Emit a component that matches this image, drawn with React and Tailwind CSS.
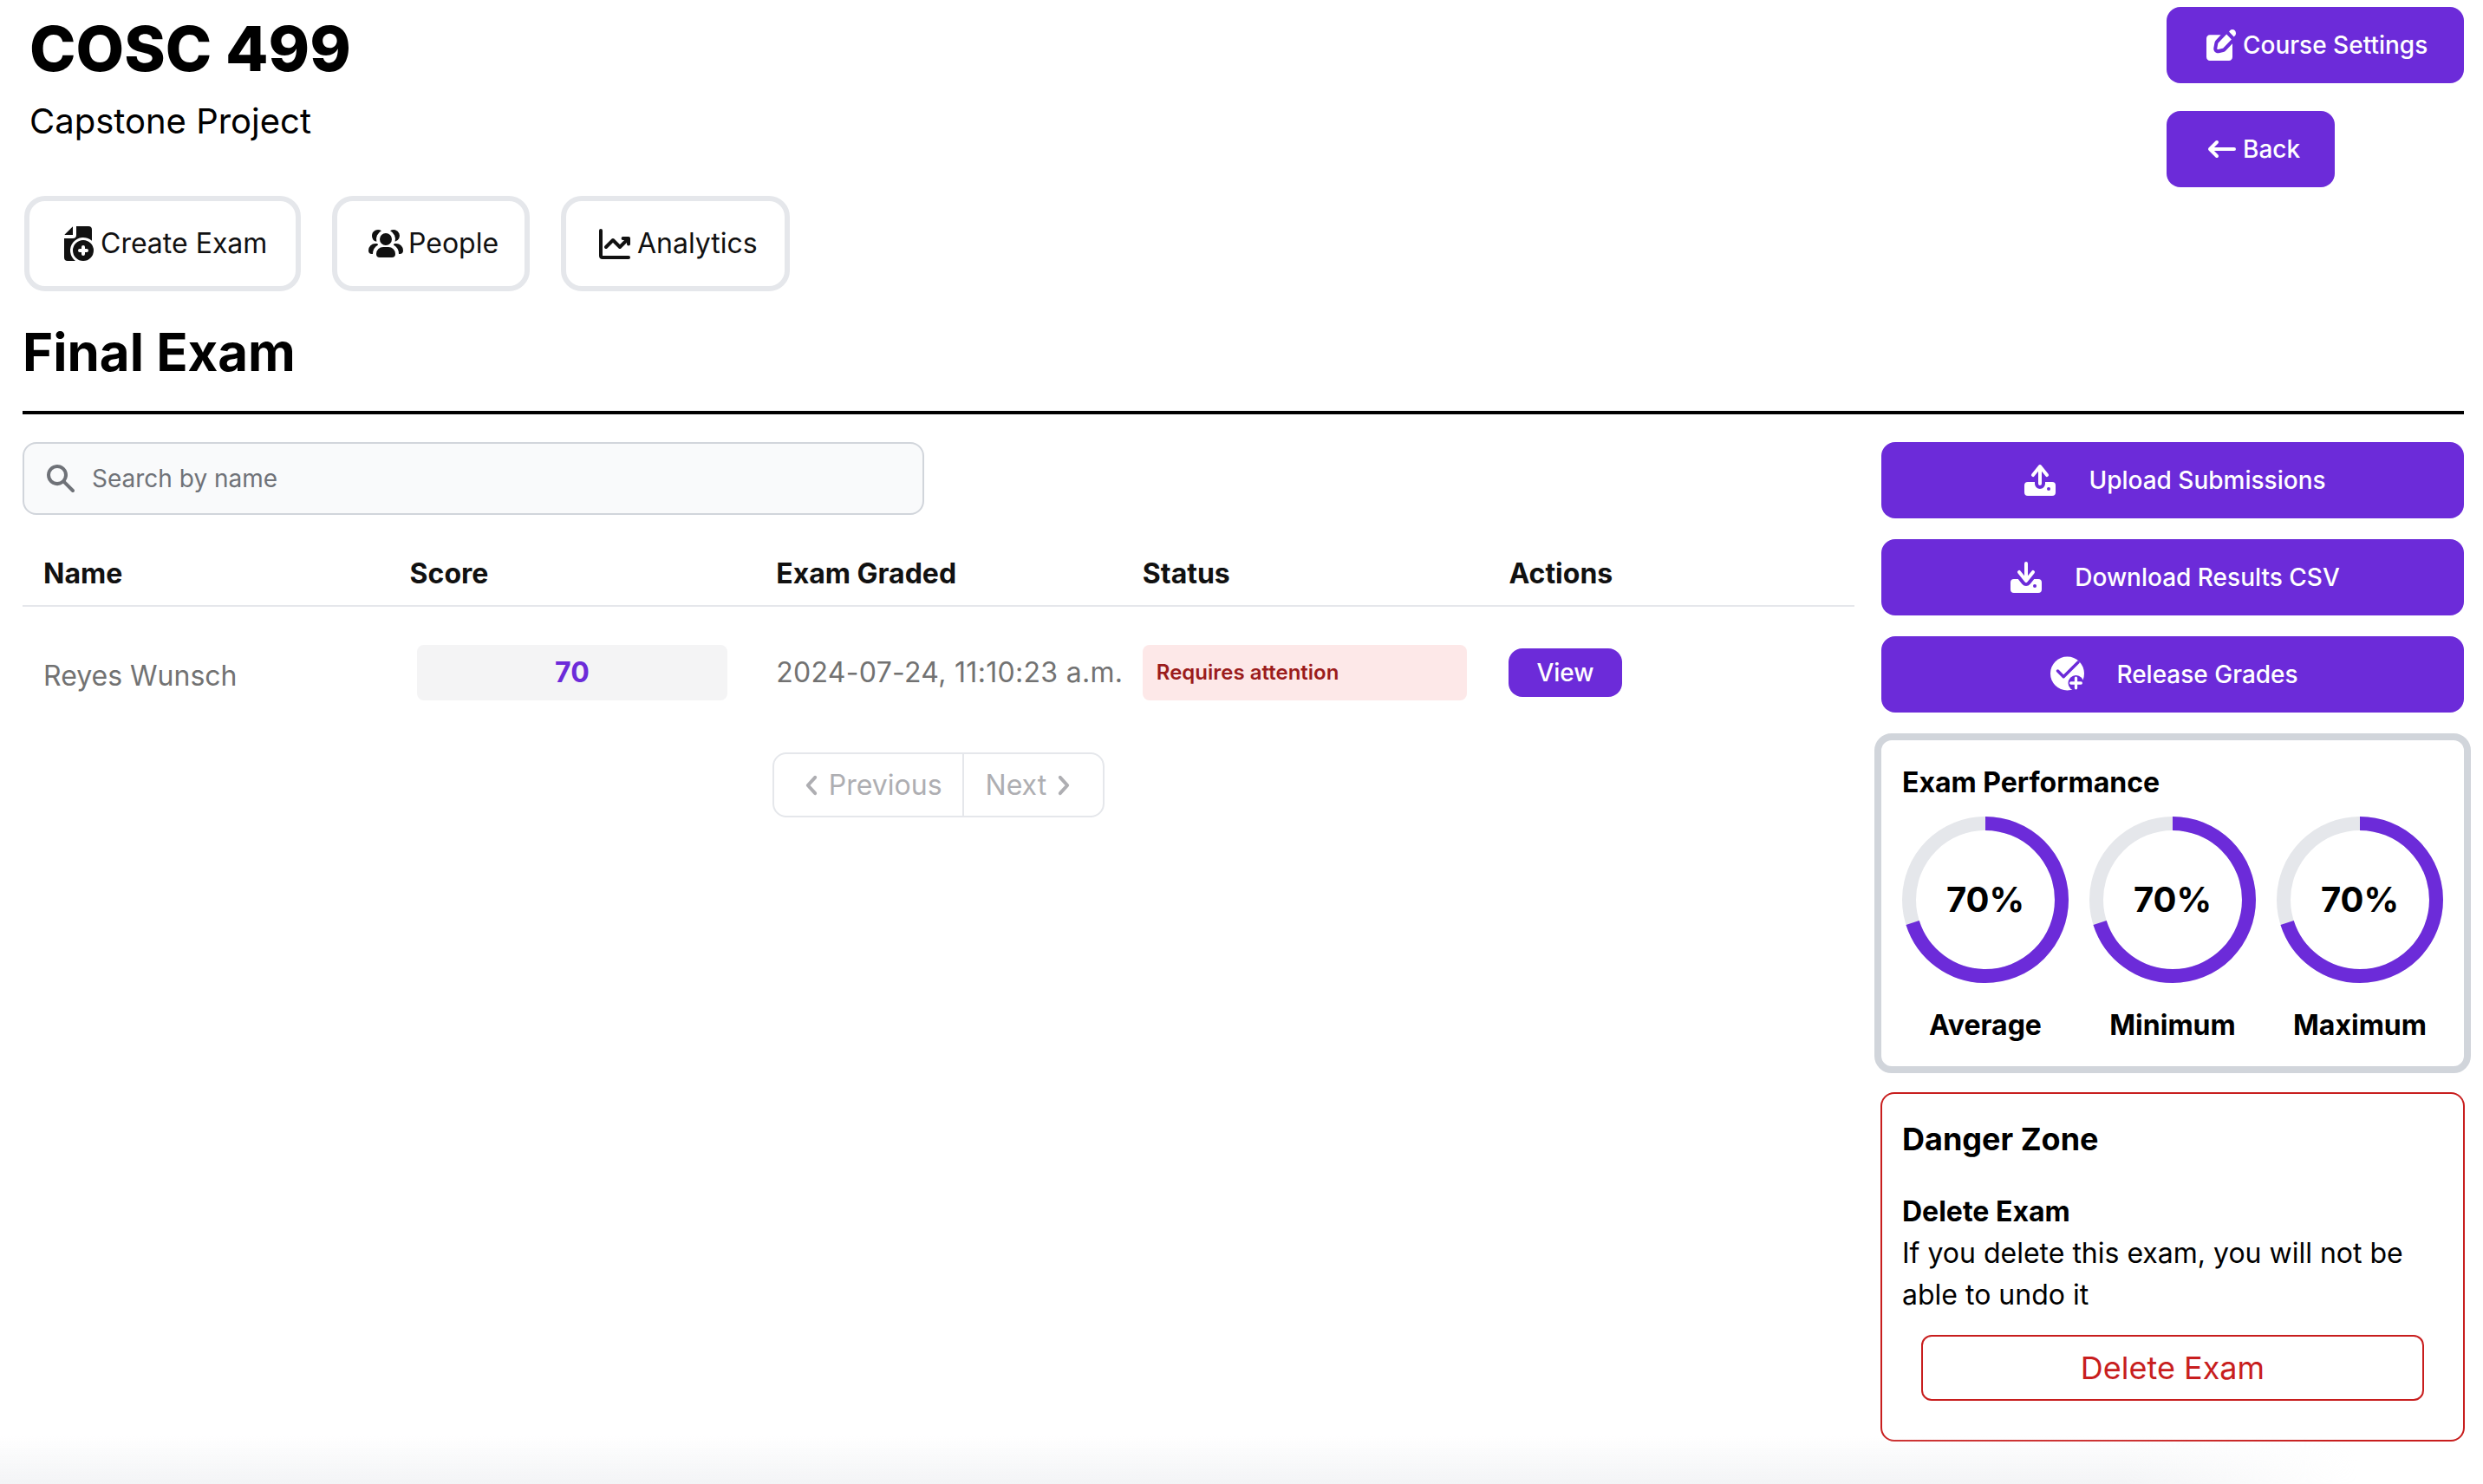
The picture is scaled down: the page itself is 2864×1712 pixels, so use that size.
const PURPLE_BTN = "bg-[#6C2BD9] text-white font-medium text-[28px] rounded-[16px]";

function Svg({ className = "", children, fill = "currentColor" }) {
  return (
    <svg viewBox="0 0 24 24" fill={fill} className={`shrink-0 ${className}`} xmlns="http://www.w3.org/2000/svg">
      {children}
    </svg>
  );
}

const EditIcon = () => (
  <Svg className="w-12 h-12">
    <path fillRule="evenodd" clipRule="evenodd" d="M11.32 6.176H5c-1.105 0-2 .949-2 2.118v10.588C3 20.052 3.895 21 5 21h11c1.105 0 2-.948 2-2.118v-7.75l-3.914 4.144A2.46 2.46 0 0 1 12.81 16l-2.681.568c-1.75.37-3.292-1.263-2.942-3.115l.536-2.839c.097-.512.335-.983.684-1.352l2.914-3.086Z" />
    <path fillRule="evenodd" clipRule="evenodd" d="M19.846 4.318a2.148 2.148 0 0 0-.437-.692 2.014 2.014 0 0 0-.654-.463 1.92 1.92 0 0 0-1.544 0 2.014 2.014 0 0 0-.654.463l-.546.578 2.852 3.02.546-.579a2.14 2.14 0 0 0 .437-.692 2.244 2.244 0 0 0 0-1.635ZM17.45 8.721 14.597 5.7 9.82 10.76a.54.54 0 0 0-.137.27l-.536 2.84c-.07.37.239.696.588.622l2.682-.567a.492.492 0 0 0 .255-.145l4.778-5.06Z" />
  </Svg>
);

const ArrowLeft = () => (
  <Svg className="w-12 h-12" fill="none">
    <path stroke="currentColor" strokeLinecap="round" strokeLinejoin="round" strokeWidth="2" d="M5 12h14M5 12l4-4m-4 4 4 4" />
  </Svg>
);

const FilePlus = () => (
  <Svg className="w-12 h-12">
    <path fillRule="evenodd" clipRule="evenodd" d="M9 7V2.221a2 2 0 0 0-.5.365L4.586 6.5a2 2 0 0 0-.365.5H9Zm2 0V2h7a2 2 0 0 1 2 2v6.41A7.5 7.5 0 1 0 10.5 22H6a2 2 0 0 1-2-2V9h5a2 2 0 0 0 2-2Z" />
    <path fillRule="evenodd" clipRule="evenodd" d="M9 16a6 6 0 1 1 12 0 6 6 0 0 1-12 0Zm6-3a1 1 0 0 1 1 1v1h1a1 1 0 1 1 0 2h-1v1a1 1 0 1 1-2 0v-1h-1a1 1 0 1 1 0-2h1v-1a1 1 0 0 1 1-1Z" />
  </Svg>
);

const UsersIcon = () => (
  <Svg className="w-12 h-12">
    <path fillRule="evenodd" clipRule="evenodd" d="M12 6a3.5 3.5 0 1 0 0 7 3.5 3.5 0 0 0 0-7Zm-1.5 8a4 4 0 0 0-4 4 2 2 0 0 0 2 2h7a2 2 0 0 0 2-2 4 4 0 0 0-4-4h-3Zm6.82-3.096a5.51 5.51 0 0 0-2.797-6.293 3.5 3.5 0 1 1 2.796 6.292ZM19.5 18h.5a2 2 0 0 0 2-2 4 4 0 0 0-4-4h-1.1a5.503 5.503 0 0 1-.471.762A5.998 5.998 0 0 1 19.5 18ZM4 7.5a3.5 3.5 0 0 1 5.477-2.889 5.5 5.5 0 0 0-2.796 6.293A3.501 3.501 0 0 1 4 7.5ZM7.1 12H6a4 4 0 0 0-4 4 2 2 0 0 0 2 2h.5a5.998 5.998 0 0 1 3.071-5.238A5.505 5.505 0 0 1 7.1 12Z" />
  </Svg>
);

const ChartIcon = () => (
  <Svg className="w-12 h-12" fill="none">
    <path stroke="currentColor" strokeLinecap="round" strokeLinejoin="round" strokeWidth="2" d="M4 4.5V19a1 1 0 0 0 1 1h15M7 14l4-4 4 4 5-5m0 0h-3.207M20 9v3.207" />
  </Svg>
);

const UploadIcon = () => (
  <Svg className="w-12 h-12">
    <path fillRule="evenodd" clipRule="evenodd" d="M12 3a1 1 0 0 1 .78.375l4 5a1 1 0 1 1-1.56 1.25L13 6.85V14a1 1 0 1 1-2 0V6.85L8.78 9.626a1 1 0 1 1-1.56-1.25l4-5A1 1 0 0 1 12 3ZM9 14v-1H5a2 2 0 0 0-2 2v4a2 2 0 0 0 2 2h14a2 2 0 0 0 2-2v-4a2 2 0 0 0-2-2h-4v1a3 3 0 1 1-6 0Zm8 2a1 1 0 1 0 0 2h.01a1 1 0 1 0 0-2H17Z" />
  </Svg>
);

const DownloadIcon = () => (
  <Svg className="w-12 h-12">
    <path fillRule="evenodd" clipRule="evenodd" d="M13 11.15V4a1 1 0 1 0-2 0v7.15L8.78 8.374a1 1 0 1 0-1.56 1.25l4 5a1 1 0 0 0 1.56 0l4-5a1 1 0 1 0-1.56-1.25L13 11.15Z" />
    <path fillRule="evenodd" clipRule="evenodd" d="M9.657 15.874 7.358 13H5a2 2 0 0 0-2 2v4a2 2 0 0 0 2 2h14a2 2 0 0 0 2-2v-4a2 2 0 0 0-2-2h-2.358l-2.3 2.874a3 3 0 0 1-4.685 0ZM17 16a1 1 0 1 0 0 2h.01a1 1 0 1 0 0-2H17Z" />
  </Svg>
);

const ReleaseIcon = () => (
  <svg viewBox="-4 -4 48 48" className="w-12 h-12 shrink-0" xmlns="http://www.w3.org/2000/svg">
    <circle cx="19.5" cy="19" r="19.5" fill="#fff" />
    <path d="M8.5 16l6.7 6.7L32 6" fill="none" stroke="#6C2BD9" strokeWidth="3.4" strokeLinecap="round" strokeLinejoin="round" />
    <circle cx="29.5" cy="30" r="9" fill="#6C2BD9" />
    <path d="M29.5 24.2v11.6M23.7 30h11.6" stroke="#fff" strokeWidth="3.3" strokeLinecap="round" />
  </svg>
);

const SearchIcon = () => (
  <svg viewBox="0 0 20 20" fill="currentColor" className="w-10 h-10 shrink-0 text-[#6f7278]" xmlns="http://www.w3.org/2000/svg">
    <path fillRule="evenodd" clipRule="evenodd" d="M8 4a4 4 0 100 8 4 4 0 000-8zM2 8a6 6 0 1110.89 3.476l4.817 4.817a1 1 0 01-1.414 1.414l-4.816-4.816A6 6 0 012 8z" />
  </svg>
);

const ChevronLeft = () => (
  <Svg className="w-10 h-10" fill="none">
    <path stroke="currentColor" strokeLinecap="round" strokeLinejoin="round" strokeWidth="2.4" d="m14.5 17.5-5-5.5 5-5.5" />
  </Svg>
);

const ChevronRight = () => (
  <Svg className="w-10 h-10" fill="none">
    <path stroke="currentColor" strokeLinecap="round" strokeLinejoin="round" strokeWidth="2.4" d="m9.5 17.5 5-5.5-5-5.5" />
  </Svg>
);

function Tab({ icon, label, className }) {
  return (
    <button className={`flex items-center gap-[2px] h-[110px] pl-[32px] border-[6px] border-[#e5e7eb] rounded-[24px] bg-white text-[32px] text-[#111111] whitespace-nowrap ${className}`}>
      {icon}
      <span>{label}</span>
    </button>
  );
}

function ActionButton({ icon, label }) {
  return (
    <button className={`flex items-center justify-center gap-8 w-full h-[88px] ${PURPLE_BTN}`}>
      {icon}
      <span>{label}</span>
    </button>
  );
}

function Ring({ label }) {
  const r = 88;
  const c = 2 * Math.PI * r;
  return (
    <div className="flex flex-col items-center w-[192px]">
      <div className="relative w-[192px] h-[192px]">
        <svg viewBox="0 0 192 192" className="w-full h-full -rotate-90" xmlns="http://www.w3.org/2000/svg">
          <circle cx="96" cy="96" r={r} fill="none" stroke="#e5e7eb" strokeWidth="16" />
          <circle cx="96" cy="96" r={r} fill="none" stroke="#6C2BD9" strokeWidth="16" strokeDasharray={`${c * 0.7} ${c}`} />
        </svg>
        <div className="absolute inset-0 flex items-center justify-center text-[40px] font-[650] text-black">70%</div>
      </div>
      <div className="mt-[25px] text-[32px] leading-[48px] font-[650] text-black whitespace-nowrap">{label}</div>
    </div>
  );
}

export default function App() {
  return (
    <div
      className="relative h-[1712px] overflow-hidden bg-white pl-[26px] pr-[22px] text-black"
      style={{ fontFamily: "Inter, sans-serif" }}
    >
      <header className="flex justify-between">
        <div className="pl-[8px] pt-[16px]">
          <h1 className="text-[72px] leading-[80px] font-extrabold">COSC 499</h1>
          <p className="mt-[16px] text-[40px] leading-[56px]">Capstone Project</p>
        </div>
        <div className="w-[343px] pt-[8px] flex flex-col items-start gap-[32px]">
          <button className={`flex items-center h-[88px] px-10 w-full ${PURPLE_BTN}`}>
            <EditIcon />
            <span>Course Settings</span>
          </button>
          <button className={`flex items-center h-[88px] px-10 ${PURPLE_BTN}`}>
            <ArrowLeft />
            <span>Back</span>
          </button>
        </div>
      </header>

      <nav className="mt-[10px] ml-[2px] flex gap-[36px]">
        <Tab icon={<FilePlus />} label="Create Exam" className="w-[319px]" />
        <Tab icon={<UsersIcon />} label="People" className="w-[228px]" />
        <Tab icon={<ChartIcon />} label="Analytics" className="w-[264px]" />
      </nav>

      <h2 className="mt-[34px] text-[60px] leading-[72px] font-bold">Final Exam</h2>
      <div className="mt-[32px] h-[4px] bg-black" />

      <main className="mt-[32px] flex gap-[31px]">
        <section className="w-[2113px]">
          <div className="w-[1040px] h-[84px] flex items-center gap-[16px] pl-[22px] rounded-[16px] border-2 border-[#d1d5db] bg-[#f9fafb]">
            <SearchIcon />
            <span className="text-[28px] text-[#6f7278]">Search by name</span>
          </div>

          <div className="mt-[30px] h-[76px] pt-[2px] grid grid-cols-5 items-center border-b-2 border-[#e5e7eb] text-[32px] font-[650] text-[#111111]">
            <div className="px-6">Name</div>
            <div className="px-6">Score</div>
            <div className="px-6">Exam Graded</div>
            <div className="px-6">Status</div>
            <div className="px-6">Actions</div>
          </div>

          <div className="pt-[44px] grid grid-cols-5 items-center text-[32px] text-[#727272]">
            <div className="px-6 pt-[8px]">Reyes Wunsch</div>
            <div className="px-6">
              <div className="mx-2 h-[64px] flex items-center justify-center rounded-lg bg-[#f4f4f5] text-[#6C2BD9] font-bold">70</div>
            </div>
            <div className="px-6 whitespace-nowrap tracking-[0.3px]">2024-07-24, 11:10:23 a.m.</div>
            <div className="px-6">
              <div className="h-[64px] flex items-center px-4 rounded-lg bg-[#fde8e8] text-[#9b1c1c] text-[24px] font-semibold">Requires attention</div>
            </div>
            <div className="px-6">
              <button className="h-[56px] px-8 rounded-[16px] bg-[#6C2BD9] text-white text-[28px] font-medium">View</button>
            </div>
          </div>

          <div className="mt-[60px] flex justify-center">
            <div className="flex h-[75px] border-2 border-[#e5e7eb] rounded-[16px] text-[32px] text-[#aeaeb2]">
              <div className="flex items-center px-[23px] border-r-2 border-[#e5e7eb]">
                <ChevronLeft />
                <span>Previous</span>
              </div>
              <div className="flex items-center px-[25px]">
                <span>Next</span>
                <ChevronRight />
              </div>
            </div>
          </div>
        </section>

        <aside className="w-[672px] flex flex-col">
          <div className="flex flex-col gap-6">
            <ActionButton icon={<UploadIcon />} label="Upload Submissions" />
            <ActionButton icon={<DownloadIcon />} label="Download Results CSV" />
            <ActionButton icon={<ReleaseIcon />} label="Release Grades" />
          </div>

          <div className="mt-6 -mx-2 h-[392px] border-[8px] border-[#d1d5db] rounded-[20px] px-6 pt-[25px]">
            <h3 className="text-[32px] leading-[48px] font-[650]">Exam Performance</h3>
            <div className="mt-[15px] flex gap-6">
              <Ring label="Average" />
              <Ring label="Minimum" />
              <Ring label="Maximum" />
            </div>
          </div>

          <div className="mt-[22px] -mx-px h-[403px] border-2 border-[#c81e1e] rounded-[16px] px-[23px] pt-6">
            <h3 className="text-[36px] leading-[56px] font-[650]">Danger Zone</h3>
            <h4 className="mt-[32px] text-[32px] leading-[48px] font-[650]">Delete Exam</h4>
            <p className="text-[32px] leading-[48px]">If you delete this exam, you will not be able to undo it</p>
            <button className="mt-[22px] mx-auto block w-[580px] h-[76px] border-2 border-[#c81e1e] rounded-[12px] text-[36px] text-[#c81e1e]">Delete Exam</button>
          </div>
        </aside>
      </main>

      <div className="absolute bottom-0 left-0 w-[2720px] h-[56px] pointer-events-none bg-gradient-to-b from-white/0 to-[#f3f4f6] [mask-image:linear-gradient(to_right,black_90%,transparent)]" />
    </div>
  );
}
